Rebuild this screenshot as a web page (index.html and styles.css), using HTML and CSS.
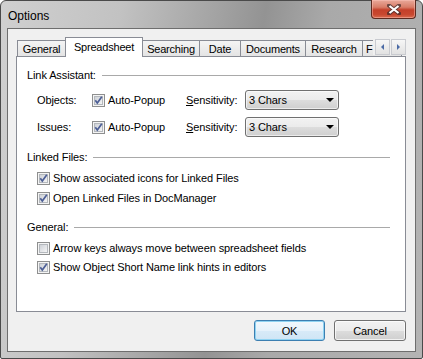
FILE: index.html
```html
<!DOCTYPE html>
<html>
<head>
<meta charset="utf-8">
<link rel="stylesheet" href="styles.css">
</head>
<body>
<div class="window">
  <div class="titlebar">
    <span class="title">Options</span>
    <div class="close">
      <svg width="14" height="11" viewBox="0 0 14 11">
        <path d="M2 1.5 L12 9.5 M12 1.5 L2 9.5" stroke="#3a2a2a" stroke-width="4" stroke-linecap="square" fill="none" opacity="0.7"/>
        <path d="M2.5 2 L11.5 9 M11.5 2 L2.5 9" stroke="#ffffff" stroke-width="2.2" fill="none"/>
      </svg>
    </div>
  </div>
  <div class="client">
    <div class="tabstrip">
      <div class="tab w-general">General</div>
      <div class="tab selected w-spread">Spreadsheet</div>
      <div class="tab w-search">Searching</div>
      <div class="tab w-date">Date</div>
      <div class="tab w-docs">Documents</div>
      <div class="tab w-research">Research</div>
      <div class="tab w-f">F</div>
      <div class="scroller">
        <div class="sbtn"><span class="arr left"></span></div>
        <div class="sbtn"><span class="arr right"></span></div>
      </div>
    </div>
    <div class="panel">
      <div class="ghead g1"><span>Link Assistant:</span></div>
      <div class="lrow r1">
        <span class="lbl">Objects:</span>
        <span class="chk">
          <svg width="13" height="13" viewBox="0 0 13 13"><defs><linearGradient id="g1" x1="0" y1="0" x2="1" y2="1"><stop offset="0" stop-color="#cbcfd5"/><stop offset="1" stop-color="#f7f7f7"/></linearGradient></defs><rect x="0.5" y="0.5" width="12" height="12" fill="#f4f4f4" stroke="#8e8f8f"/><rect x="2.5" y="2.5" width="8" height="8" fill="url(#g1)" stroke="#b4b8bd"/><path d="M3.3 6.3 L5.3 9 L9.8 2.8" stroke="#4d5f96" stroke-width="1.7" fill="none"/></svg>
        </span>
        <span class="ctext">Auto-Popup</span>
        <span class="sens"><span class="u">S</span>ensitivity:</span>
        <div class="select">3 Chars<span class="tri"></span></div>
      </div>
      <div class="lrow r2">
        <span class="lbl">Issues:</span>
        <span class="chk">
          <svg width="13" height="13" viewBox="0 0 13 13"><defs><linearGradient id="g2" x1="0" y1="0" x2="1" y2="1"><stop offset="0" stop-color="#cbcfd5"/><stop offset="1" stop-color="#f7f7f7"/></linearGradient></defs><rect x="0.5" y="0.5" width="12" height="12" fill="#f4f4f4" stroke="#8e8f8f"/><rect x="2.5" y="2.5" width="8" height="8" fill="url(#g2)" stroke="#b4b8bd"/><path d="M3.3 6.3 L5.3 9 L9.8 2.8" stroke="#4d5f96" stroke-width="1.7" fill="none"/></svg>
        </span>
        <span class="ctext">Auto-Popup</span>
        <span class="sens"><span class="u">S</span>ensitivity:</span>
        <div class="select">3 Chars<span class="tri"></span></div>
      </div>

      <div class="ghead g2"><span>Linked Files:</span></div>
      <div class="crow c1">
        <span class="chk">
          <svg width="13" height="13" viewBox="0 0 13 13"><defs><linearGradient id="g3" x1="0" y1="0" x2="1" y2="1"><stop offset="0" stop-color="#cbcfd5"/><stop offset="1" stop-color="#f7f7f7"/></linearGradient></defs><rect x="0.5" y="0.5" width="12" height="12" fill="#f4f4f4" stroke="#8e8f8f"/><rect x="2.5" y="2.5" width="8" height="8" fill="url(#g3)" stroke="#b4b8bd"/><path d="M3.3 6.3 L5.3 9 L9.8 2.8" stroke="#4d5f96" stroke-width="1.7" fill="none"/></svg>
        </span>
        <span class="ctext">Show associated icons for Linked Files</span>
      </div>
      <div class="crow c2">
        <span class="chk">
          <svg width="13" height="13" viewBox="0 0 13 13"><defs><linearGradient id="g4" x1="0" y1="0" x2="1" y2="1"><stop offset="0" stop-color="#cbcfd5"/><stop offset="1" stop-color="#f7f7f7"/></linearGradient></defs><rect x="0.5" y="0.5" width="12" height="12" fill="#f4f4f4" stroke="#8e8f8f"/><rect x="2.5" y="2.5" width="8" height="8" fill="url(#g4)" stroke="#b4b8bd"/><path d="M3.3 6.3 L5.3 9 L9.8 2.8" stroke="#4d5f96" stroke-width="1.7" fill="none"/></svg>
        </span>
        <span class="ctext">Open Linked Files in DocManager</span>
      </div>

      <div class="ghead g3"><span>General:</span></div>
      <div class="crow c3">
        <span class="chk">
          <svg width="13" height="13" viewBox="0 0 13 13"><defs><linearGradient id="g5" x1="0" y1="0" x2="1" y2="1"><stop offset="0" stop-color="#cbcfd5"/><stop offset="1" stop-color="#f7f7f7"/></linearGradient></defs><rect x="0.5" y="0.5" width="12" height="12" fill="#f4f4f4" stroke="#8e8f8f"/><rect x="2.5" y="2.5" width="8" height="8" fill="url(#g5)" stroke="#b4b8bd"/></svg>
        </span>
        <span class="ctext">Arrow keys always move between spreadsheet fields</span>
      </div>
      <div class="crow c4">
        <span class="chk">
          <svg width="13" height="13" viewBox="0 0 13 13"><defs><linearGradient id="g6" x1="0" y1="0" x2="1" y2="1"><stop offset="0" stop-color="#cbcfd5"/><stop offset="1" stop-color="#f7f7f7"/></linearGradient></defs><rect x="0.5" y="0.5" width="12" height="12" fill="#f4f4f4" stroke="#8e8f8f"/><rect x="2.5" y="2.5" width="8" height="8" fill="url(#g6)" stroke="#b4b8bd"/><path d="M3.3 6.3 L5.3 9 L9.8 2.8" stroke="#4d5f96" stroke-width="1.7" fill="none"/></svg>
        </span>
        <span class="ctext">Show Object Short Name link hints in editors</span>
      </div>
    </div>
    <div class="buttons">
      <div class="btn default">OK</div>
      <div class="btn">Cancel</div>
    </div>
  </div>
</div>
</body>
</html>
```

FILE: styles.css
```css
html, body {
  margin: 0;
  padding: 0;
  width: 423px;
  height: 359px;
  overflow: hidden;
  background: #ffffff;
}

.window {
  box-sizing: border-box;
  width: 423px;
  height: 359px;
  border: 1px solid #4a4a4a;
  border-radius: 6px 6px 2px 2px;
  background: linear-gradient(100deg, #d0d0d0 0%, #c2c2c2 25%, #a3a3a3 45%, #939393 55%, #a9a9a9 68%, #b4b4b4 100%);
  padding: 0 6px 6px 6px;
  font-family: "Liberation Sans", Arial, sans-serif;
  font-size: 11px;
  letter-spacing: -0.1px;
  color: #000;
  position: relative;
}

.titlebar {
  height: 27px;
  display: flex;
  align-items: center;
  position: relative;
}

.title {
  font-size: 12px;
  letter-spacing: 0;
  margin-left: 1px;
  margin-top: 3px;
  color: #000;
}

.close {
  position: absolute;
  right: 0px;
  top: -1px;
  width: 45px;
  height: 19px;
  box-sizing: border-box;
  border: 1px solid #5c2a20;
  border-top: none;
  border-radius: 0 0 4px 4px;
  background: linear-gradient(#e9a99a 0%, #d87d68 40%, #c4402a 55%, #c8472f 80%, #d96b4e 100%);
  display: flex;
  align-items: center;
  justify-content: center;
  box-shadow: inset 0 0 0 1px rgba(255, 200, 190, 0.45);
}

.client {
  box-sizing: border-box;
  height: 324px;
  border: 1px solid #6e6e6e;
  background: #f0f0f0;
  display: flex;
  flex-direction: column;
}

.tabstrip {
  position: relative;
  z-index: 1;
  display: flex;
  align-items: flex-start;
  height: 20px;
  margin: 8px 9px -1px 9px;
  overflow: hidden;
}

.tab {
  box-sizing: border-box;
  height: 16px;
  margin-top: 3px;
  margin-left: -1px;
  border: 1px solid #898c95;
  border-bottom: none;
  background: linear-gradient(#f4f4f4, #e4e4e4);
  display: flex;
  align-items: center;
  justify-content: center;
  flex: none;
  white-space: nowrap;
  padding-top: 1px;
  letter-spacing: -0.2px;
}

.tab:first-child {
  margin-left: 0;
}

.tab.selected {
  height: 20px;
  margin-top: 0;
  background: #ffffff;
  position: relative;
  z-index: 2;
  padding-top: 0;
  padding-bottom: 1px;
}

.w-general { width: 49px; }
.w-spread { width: 78px; }
.w-search { width: 58px; }
.w-date { width: 42px; }
.w-docs { width: 66px; }
.w-research { width: 58px; }
.w-f { width: 40px; justify-content: flex-start; padding-left: 3px; }

.scroller {
  position: absolute;
  right: 0;
  top: 2px;
  display: flex;
  gap: 1px;
  z-index: 3;
  background: #f0f0f0;
  padding-left: 2px;
}

.sbtn {
  box-sizing: border-box;
  width: 15px;
  height: 16px;
  border: 1px solid #c9cbd0;
  background: linear-gradient(#f6f6f6, #e2e2e2);
  display: flex;
  align-items: center;
  justify-content: center;
}

.arr {
  width: 0;
  height: 0;
  border-top: 3px solid transparent;
  border-bottom: 3px solid transparent;
}

.arr.left { border-right: 3px solid #4a6aa5; }
.arr.right { border-left: 3px solid #4a6aa5; }

.panel {
  box-sizing: border-box;
  height: 256px;
  margin: 0 9px 0 8px;
  border: 1px solid #898c95;
  background: #ffffff;
  padding: 0 15px 0 10px;
  display: flex;
  flex-direction: column;
}

.ghead {
  height: 14px;
  display: flex;
  align-items: center;
  flex: none;
}

.ghead::after {
  content: "";
  flex: 1;
  height: 1px;
  background: #a9a9a9;
  margin-left: 6px;
  margin-top: 0px;
}

.g1 { margin-top: 11px; }
.g2 { margin-top: 13px; }
.g3 { margin-top: 14px; }

.lrow {
  height: 20px;
  display: flex;
  align-items: center;
  padding-left: 10px;
  flex: none;
}

.r1 { margin-top: 8px; }
.r2 { margin-top: 7px; }

.lbl {
  width: 55px;
  flex: none;
}

.chk {
  width: 13px;
  height: 13px;
  display: block;
  flex: none;
}

.chk svg { display: block; }

.ctext {
  margin-left: 3px;
  white-space: nowrap;
}

.sens {
  margin-left: auto;
  position: relative;
}

.lrow .ctext {
  width: 78px;
}

.lrow .sens {
  margin-left: 0;
  width: 59px;
}

.u { text-decoration: underline; }

.select {
  box-sizing: border-box;
  width: 94px;
  height: 20px;
  border: 1px solid #707070;
  border-radius: 3px;
  background: linear-gradient(#f2f2f2 0%, #ebebeb 50%, #dddddd 50%, #cfcfcf 100%);
  padding-left: 3px;
  display: flex;
  align-items: center;
  position: relative;
  box-shadow: inset 0 0 0 1px rgba(255,255,255,0.6);
}

.tri {
  position: absolute;
  right: 4px;
  top: 7px;
  width: 0;
  height: 0;
  border-left: 4px solid transparent;
  border-right: 4px solid transparent;
  border-top: 4px solid #000;
}

.crow {
  height: 16px;
  display: flex;
  align-items: center;
  padding-left: 10px;
  flex: none;
}

.crow .ctext { margin-left: 3px; }

.c1 { margin-top: 6px; }
.c2 { margin-top: 4px; }
.c3 { margin-top: 6px; }
.c4 { margin-top: 3px; }

.buttons {
  display: flex;
  justify-content: flex-end;
  gap: 9px;
  margin-top: 8px;
  padding-right: 9px;
}

.btn {
  box-sizing: border-box;
  width: 72px;
  height: 21px;
  border: 1px solid #707070;
  border-radius: 3px;
  background: linear-gradient(#f2f2f2 0%, #ebebeb 50%, #dddddd 50%, #cfcfcf 100%);
  display: flex;
  align-items: center;
  justify-content: center;
  box-shadow: inset 0 0 0 1px rgba(255,255,255,0.7);
}

.btn.default {
  border-color: #3c7fb1;
  background: linear-gradient(#f1f8fd 0%, #e6f2fb 50%, #d8ebf8 50%, #cfe5f5 100%);
  box-shadow: inset 0 0 0 1px #8fd3f2;
  width: 71px;
}
```
